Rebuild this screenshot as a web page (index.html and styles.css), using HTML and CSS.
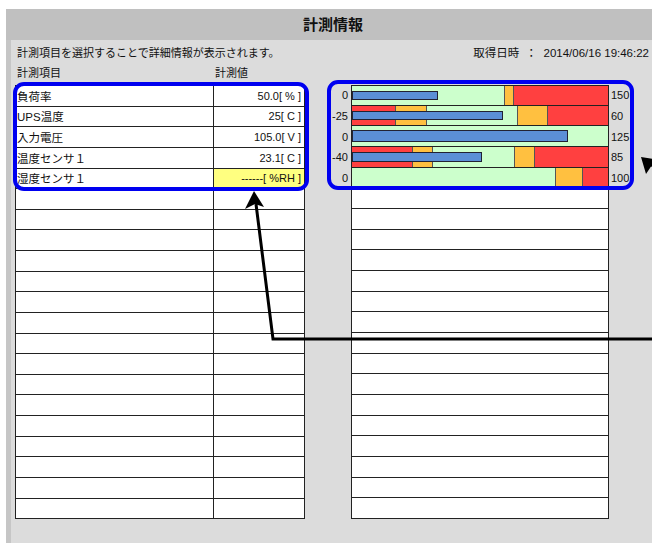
FILE: index.html
```html
<!DOCTYPE html>
<html lang="ja">
<head>
<meta charset="utf-8">
<title>計測情報</title>
<link rel="stylesheet" href="styles.css">
</head>
<body>
<div class="page">
  <div class="header"><span class="title">計測情報</span></div>
  <div class="content">
    <div class="topline">
      <span>計測項目を選択することで詳細情報が表示されます。</span>
      <span class="date">取得日時 &nbsp;： &nbsp;2014/06/16 19:46:22</span>
    </div>
    <div class="colheads">
      <span>計測項目</span>
      <span>計測値</span>
    </div>
    <div class="main">
      <div class="table">
        <div class="trow"><div class="tname">負荷率</div><div class="tval">50.0[ % ]</div></div>
        <div class="trow"><div class="tname">UPS温度</div><div class="tval">25[ C ]</div></div>
        <div class="trow"><div class="tname">入力電圧</div><div class="tval">105.0[ V ]</div></div>
        <div class="trow"><div class="tname">温度センサ１</div><div class="tval">23.1[ C ]</div></div>
        <div class="trow"><div class="tname">湿度センサ１</div><div class="tval warn">------[ %RH ]</div></div>
        <div class="trow"><div class="tname"></div><div class="tval"></div></div>
        <div class="trow"><div class="tname"></div><div class="tval"></div></div>
        <div class="trow"><div class="tname"></div><div class="tval"></div></div>
        <div class="trow"><div class="tname"></div><div class="tval"></div></div>
        <div class="trow"><div class="tname"></div><div class="tval"></div></div>
        <div class="trow"><div class="tname"></div><div class="tval"></div></div>
        <div class="trow"><div class="tname"></div><div class="tval"></div></div>
        <div class="trow"><div class="tname"></div><div class="tval"></div></div>
        <div class="trow"><div class="tname"></div><div class="tval"></div></div>
        <div class="trow"><div class="tname"></div><div class="tval"></div></div>
        <div class="trow"><div class="tname"></div><div class="tval"></div></div>
        <div class="trow"><div class="tname"></div><div class="tval"></div></div>
        <div class="trow"><div class="tname"></div><div class="tval"></div></div>
        <div class="trow"><div class="tname"></div><div class="tval"></div></div>
        <div class="trow"><div class="tname"></div><div class="tval"></div></div>
        <div class="trow"><div class="tname"></div><div class="tval"></div></div>
      </div>
      <div class="chart">
        <div class="crow first">
          <div class="lab">0</div>
          <div class="cbar">
            <div class="z g" style="width:153px"></div><div class="z o" style="width:9px"></div><div class="z r last"></div>
            <div class="bar" style="width:86px"></div>
          </div>
          <div class="rlab">150</div>
        </div>
        <div class="crow">
          <div class="lab">-25</div>
          <div class="cbar">
            <div class="z r" style="width:44px"></div><div class="z o" style="width:31px"></div><div class="z g" style="width:91px"></div><div class="z o" style="width:30px"></div><div class="z r last"></div>
            <div class="bar" style="width:151px"></div>
          </div>
          <div class="rlab">60</div>
        </div>
        <div class="crow">
          <div class="lab">0</div>
          <div class="cbar">
            <div class="z g last"></div>
            <div class="bar thick" style="width:216px"></div>
          </div>
          <div class="rlab">125</div>
        </div>
        <div class="crow">
          <div class="lab">-40</div>
          <div class="cbar">
            <div class="z r" style="width:61px"></div><div class="z o" style="width:20px"></div><div class="z g" style="width:82px"></div><div class="z o" style="width:20px"></div><div class="z r last"></div>
            <div class="bar" style="width:130px"></div>
          </div>
          <div class="rlab">85</div>
        </div>
        <div class="crow">
          <div class="lab">0</div>
          <div class="cbar">
            <div class="z g" style="width:204px"></div><div class="z o" style="width:27px"></div><div class="z r last"></div>
          </div>
          <div class="rlab">100</div>
        </div>
        <div class="crow"><div class="lab"></div><div class="cbar"></div><div class="rlab"></div></div>
        <div class="crow"><div class="lab"></div><div class="cbar"></div><div class="rlab"></div></div>
        <div class="crow"><div class="lab"></div><div class="cbar"></div><div class="rlab"></div></div>
        <div class="crow"><div class="lab"></div><div class="cbar"></div><div class="rlab"></div></div>
        <div class="crow"><div class="lab"></div><div class="cbar"></div><div class="rlab"></div></div>
        <div class="crow"><div class="lab"></div><div class="cbar"></div><div class="rlab"></div></div>
        <div class="crow"><div class="lab"></div><div class="cbar"></div><div class="rlab"></div></div>
        <div class="crow"><div class="lab"></div><div class="cbar"></div><div class="rlab"></div></div>
        <div class="crow"><div class="lab"></div><div class="cbar"></div><div class="rlab"></div></div>
        <div class="crow"><div class="lab"></div><div class="cbar"></div><div class="rlab"></div></div>
        <div class="crow"><div class="lab"></div><div class="cbar"></div><div class="rlab"></div></div>
        <div class="crow"><div class="lab"></div><div class="cbar"></div><div class="rlab"></div></div>
        <div class="crow"><div class="lab"></div><div class="cbar"></div><div class="rlab"></div></div>
        <div class="crow"><div class="lab"></div><div class="cbar"></div><div class="rlab"></div></div>
        <div class="crow"><div class="lab"></div><div class="cbar"></div><div class="rlab"></div></div>
        <div class="crow"><div class="lab"></div><div class="cbar"></div><div class="rlab"></div></div>
      </div>
    </div>
  </div>
</div>
<div class="hl hl-left"></div>
<div class="hl hl-right"></div>
<svg class="arrows" width="652" height="543" viewBox="0 0 652 543">
  <polyline points="660,339 273,339 256,204" fill="none" stroke="#000" stroke-width="3"/>
  <polygon points="254,191 245,209 255,204 264,207" fill="#000"/>
  <line x1="649" y1="163" x2="670" y2="178" stroke="#000" stroke-width="3"/>
  <polygon points="641,157 659,160 652,165 646,174" fill="#000"/>
</svg>
</body>
</html>
```
FILE: styles.css
```css
html, body {
  margin: 0;
  padding: 0;
  background: #ffffff;
}
body {
  position: relative;
  width: 652px;
  height: 543px;
  overflow: hidden;
  font-family: "Liberation Sans", "Noto Sans CJK JP", sans-serif;
  font-size: 11px;
  color: #111;
}
.page {
  padding: 9px 0 0 6px;
}
.header {
  height: 31px;
  background: #c0c0c0;
  display: flex;
  align-items: center;
  justify-content: center;
  padding-left: 8px;
}
.title {
  font-size: 15px;
  font-weight: bold;
  line-height: 18px;
  color: #111;
}
.content {
  height: 503px;
  box-sizing: border-box;
  background: #dcdcdc;
  border-left: 5px solid #c6c6c6;
  padding: 6px 3px 0 6px;
}
.topline {
  display: flex;
  justify-content: space-between;
  height: 14px;
  line-height: 14px;
  font-size: 11px;
}
.date {
  font-size: 11.5px;
}
.colheads {
  margin-top: 6px;
  height: 14px;
  line-height: 14px;
  display: grid;
  grid-template-columns: 198px auto;
}
.main {
  margin-top: 5px;
  margin-left: -2px;
  display: flex;
}
.table {
  width: 290px;
  height: 434px;
  box-sizing: border-box;
  border: 1px solid #222;
  display: flex;
  flex-direction: column;
  background: #fff;
}
.trow {
  flex: 1;
  display: flex;
  border-bottom: 1px solid #222;
  min-height: 0;
}
.trow:last-child {
  border-bottom: none;
}
.tname {
  width: 198px;
  box-sizing: border-box;
  border-right: 1px solid #222;
  padding-left: 1px;
  display: flex;
  align-items: center;
  font-size: 11.5px;
}
.tval {
  flex: 1;
  display: flex;
  align-items: center;
  justify-content: flex-end;
  padding-right: 3px;
  font-size: 11px;
}
.tval.warn {
  background: #ffff80;
}
.chart {
  margin-left: 16px;
  height: 434px;
  display: flex;
  flex-direction: column;
}
.crow {
  flex: 1;
  display: flex;
  min-height: 0;
}
.lab {
  width: 30px;
  box-sizing: border-box;
  padding-right: 3px;
  display: flex;
  align-items: center;
  justify-content: flex-end;
  font-size: 11px;
}
.rlab {
  width: 30px;
  padding-left: 2px;
  display: flex;
  align-items: center;
  font-size: 11px;
}
.cbar {
  position: relative;
  width: 258px;
  box-sizing: border-box;
  border-left: 1px solid #222;
  border-right: 1px solid #222;
  border-bottom: 1px solid #222;
  background: #fff;
  display: flex;
}
.crow.first .cbar {
  border-top: 1px solid #222;
}
.z {
  height: 100%;
  box-sizing: border-box;
  border-right: 1px solid #555;
  flex: none;
}
.z.last {
  flex: 1;
  border-right: none;
}
.g { background: #ccffcc; }
.o { background: #ffc040; }
.r { background: #ff4040; }
.bar {
  position: absolute;
  left: 0;
  top: 5px;
  bottom: 5px;
  box-sizing: border-box;
  background: #5b8fd6;
  border: 1px solid #223;
}
.bar.thick {
  top: 4px;
  bottom: 4px;
}
.hl {
  position: absolute;
  box-sizing: border-box;
  border: 4px solid #0000f0;
  border-radius: 11px;
  pointer-events: none;
}
.hl-left {
  left: 13px;
  top: 82px;
  width: 296px;
  height: 109px;
}
.hl-right {
  left: 327px;
  top: 80px;
  width: 307px;
  height: 110px;
}
.arrows {
  position: absolute;
  left: 0;
  top: 0;
  pointer-events: none;
}
```
